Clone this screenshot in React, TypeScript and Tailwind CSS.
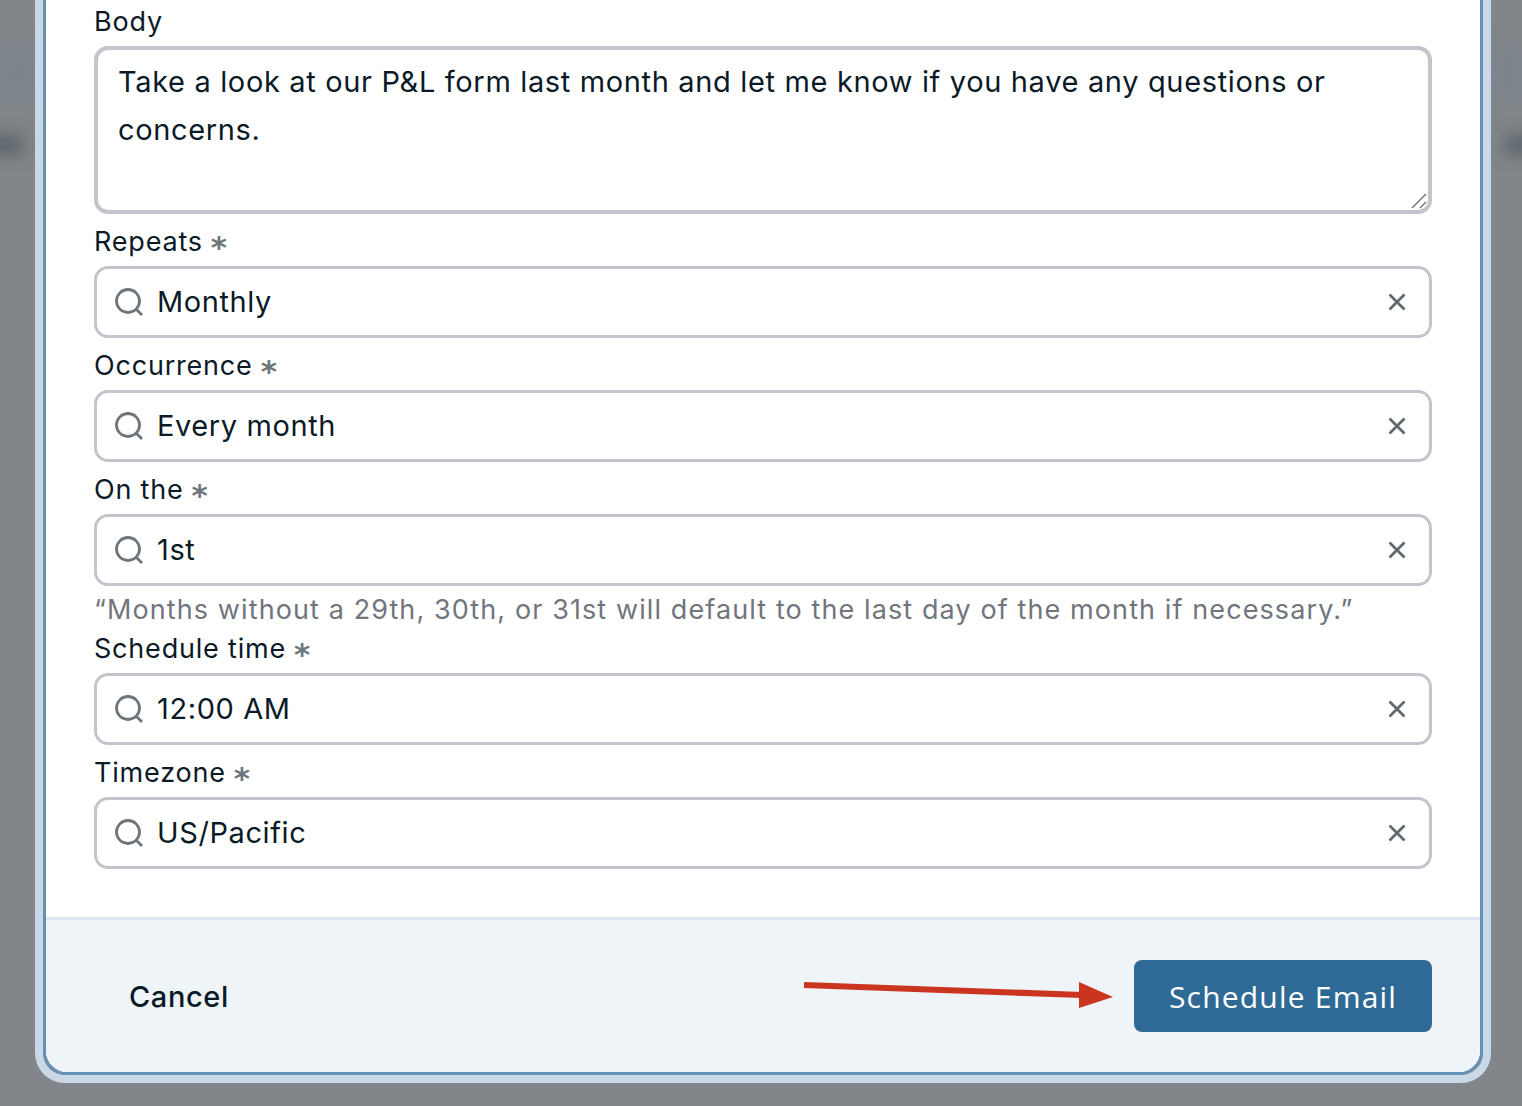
import React from "react";

const font = "font-['Inter','Noto_Sans',sans-serif]";

function SearchIcon() {
  return (
    <svg width="30" height="30" viewBox="0 0 30 30" fill="none" className="shrink-0 text-[#6c767b]">
      <circle cx="14" cy="14" r="11.5" stroke="currentColor" strokeWidth="2.8" />
      <path d="M22.5 22.5L28 28" stroke="currentColor" strokeWidth="2.8" />
    </svg>
  );
}

function CloseIcon() {
  return (
    <svg width="20" height="20" viewBox="0 0 20 20" fill="none" className="shrink-0 text-[#5f696e]">
      <path d="M2.5 2.5L17.5 17.5M17.5 2.5L2.5 17.5" stroke="currentColor" strokeWidth="2.8" />
    </svg>
  );
}

function Label({ text }: { text: string }) {
  return (
    <div className="h-[52px] flex items-center pt-[4px] text-[27px] tracking-[0.8px] text-[#0b1a27]">
      <span>{text}</span>
      <span className="ml-[8px] h-[20px] flex items-center font-['DejaVu_Sans',sans-serif] font-bold text-[31px] leading-none text-[#6c767b] translate-y-[5px]">*</span>
    </div>
  );
}

function Field({ label, value }: { label: string; value: string }) {
  return (
    <div>
      <Label text={label} />
      <div className="h-[72px] rounded-[14px] border-[3px] border-[#c4c4cc] bg-white flex items-center pl-[17px] pr-[22px]">
        <SearchIcon />
        <span className="ml-[13px] flex-1 text-[29px] tracking-[0.6px] text-[#0b1a27]">{value}</span>
        <CloseIcon />
      </div>
    </div>
  );
}

export default function App() {
  return (
    <div className={`${font} relative h-[1106px] w-[1522px] overflow-hidden bg-[#82868a] flex flex-col justify-end pb-[23px] pl-[35px] pr-[31px]`}>
      <div className="absolute left-[-40px] top-[134px] h-[22px] w-[66px] rounded-full bg-[#5f676c] blur-[8px]" />
      <div className="absolute right-[-30px] top-[134px] h-[22px] w-[50px] rounded-full bg-[#5f676c] blur-[8px]" />
      <div className="absolute left-0 top-[50px] h-[50px] w-[35px] bg-[#7b858e] blur-[12px]" />
      <div className="absolute right-0 top-[50px] h-[50px] w-[31px] bg-[#7b858e] blur-[12px]" />

      <div className="relative rounded-b-[30px] border-x-[8px] border-b-[8px] border-[#c9d9e7]">
        <div className="rounded-b-[24px] border-x-[3px] border-b-[3px] border-[#6491b6] bg-white overflow-hidden">
          <div className="pl-[48px] pr-[48px] pb-[48px]">
            <div className="h-[47px] flex items-center text-[27px] tracking-[0.8px] text-[#0b1a27]">Body</div>
            <div className="relative">
              <textarea
                readOnly
                defaultValue="Take a look at our P&L form last month and let me know if you have any questions or concerns."
                className="block w-full h-[168px] rounded-[14px] border-[4px] border-[#c4c4cc] bg-white px-[20px] py-[8px] text-[29px] leading-[48px] tracking-[0.65px] text-[#0b1a27] outline-none resize-none"
              />
              <svg className="absolute left-[1317px] top-[147px]" width="16" height="16" viewBox="0 0 16 16" fill="none">
                <path d="M1 15L15 1M9 15L15 9" stroke="#707070" strokeWidth="1.4" />
              </svg>
            </div>
            <Field label="Repeats" value="Monthly" />
            <Field label="Occurrence" value="Every month" />
            <Field label="On the" value="1st" />
            <div className="h-[35px] pt-[6px] text-[27px] leading-[36px] tracking-[1.1px] whitespace-nowrap text-[#71757d]">
              “Months without a 29th, 30th, or 31st will default to the last day of the month if necessary.”
            </div>
            <Field label="Schedule time" value="12:00 AM" />
            <Field label="Timezone" value="US/Pacific" />
          </div>
          <div className="h-[155px] border-t-[3px] border-[#dbe6f1] bg-[#eff4f9] flex items-center justify-between pl-[83px] pr-[48px]">
            <span className="pt-[2px] text-[29px] font-medium tracking-[0.6px] text-[#0b1a27]">Cancel</span>
            <div className="h-[72px] w-[298px] rounded-[8px] bg-[#2f6a96] flex items-center justify-center font-['Open_Sans',sans-serif] text-[30px] font-medium tracking-[1.2px] text-white">
              Schedule Email
            </div>
          </div>
        </div>
      </div>

      <svg className="absolute left-[800px] top-[978px]" width="316" height="34" viewBox="0 0 316 34" fill="none">
        <path d="M4 7L282 17" stroke="#cb3520" strokeWidth="6" />
        <path d="M279 4L313 19L279 30Z" fill="#cb3520" />
      </svg>
    </div>
  );
}
